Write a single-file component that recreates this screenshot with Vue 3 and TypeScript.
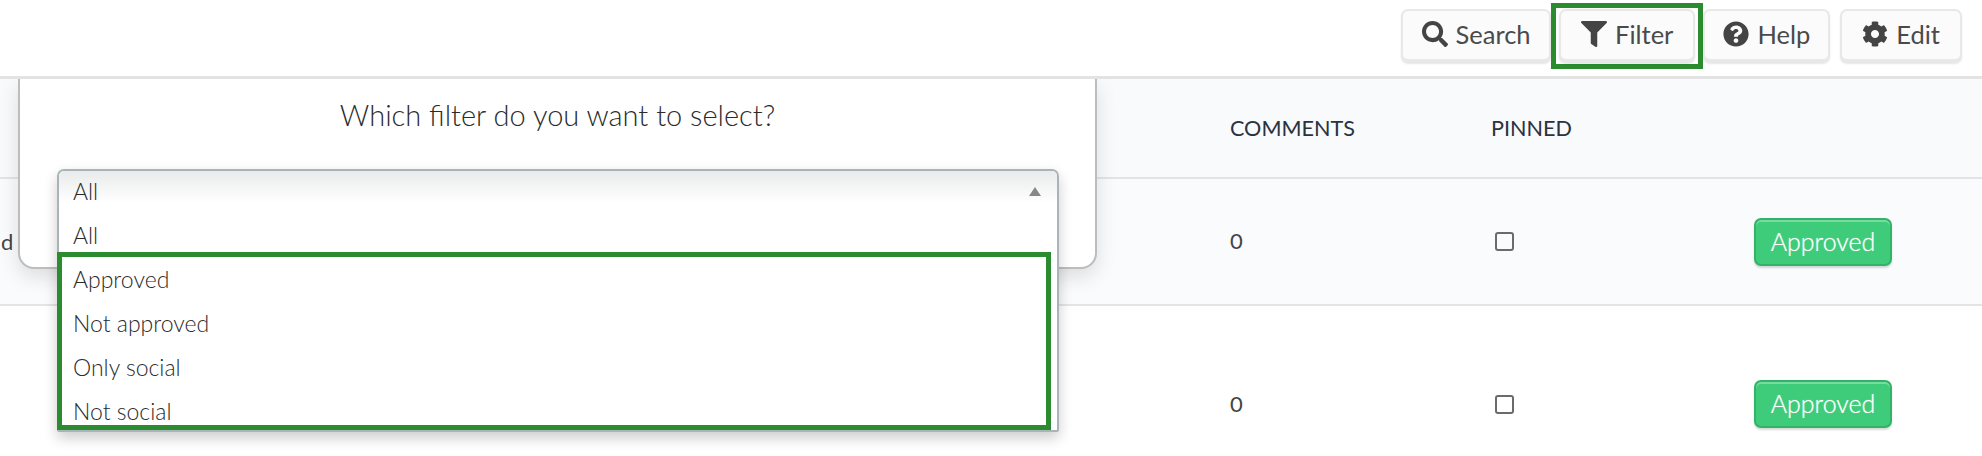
<script setup lang="ts">
const filters = ['All', 'Approved', 'Not approved', 'Only social', 'Not social'];
const rows = [
  { id: 1, name: 'd', comments: 0 },
  { id: 2, name: '', comments: 0 },
];
</script>

<template>
  <div class="page">
    <header class="topbar">
      <button type="button" class="btn btn--search">
        <svg class="ico" viewBox="0 0 512 512"><path d="M505 442.7L405.3 343c-4.5-4.5-10.6-7-17-7H372c27.6-35.3 44-79.7 44-128C416 93.1 322.9 0 208 0S0 93.1 0 208s93.1 208 208 208c48.3 0 92.7-16.4 128-44v16.3c0 6.4 2.5 12.5 7 17l99.7 99.7c9.4 9.4 24.6 9.4 33.9 0l28.3-28.3c9.4-9.4 9.4-24.6.1-34zM208 336c-70.7 0-128-57.2-128-128 0-70.7 57.2-128 128-128 70.7 0 128 57.2 128 128 0 70.7-57.2 128-128 128z" /></svg>
        Search
      </button>
      <div class="mark">
        <button type="button" class="btn">
          <svg class="ico" viewBox="0 0 512 512"><path d="M487.976 0H24.028C2.71 0-8.047 25.866 7.058 40.971L192 225.941V432c0 7.831 3.821 15.17 10.237 19.662l80 55.98C298.02 518.69 320 507.493 320 487.98V225.941l184.947-184.97C520.021 25.896 509.338 0 487.976 0z" /></svg>
          Filter
        </button>
      </div>
      <button type="button" class="btn btn--help">
        <svg class="ico" viewBox="0 0 512 512"><path d="M504 256c0 136.997-111.043 248-248 248S8 392.997 8 256C8 119.083 119.043 8 256 8s248 111.083 248 248zM262.655 90c-54.497 0-89.255 22.957-116.549 63.758-3.536 5.286-2.353 12.415 2.715 16.258l34.699 26.31c5.205 3.947 12.621 3.008 16.665-2.122 17.864-22.658 30.113-35.797 57.303-35.797 20.429 0 45.698 13.148 45.698 32.958 0 14.976-12.363 22.667-32.534 33.976C247.128 238.528 216 254.941 216 296v4c0 6.627 5.373 12 12 12h56c6.627 0 12-5.373 12-12v-1.333c0-28.462 83.186-29.647 83.186-106.667 0-58.002-60.165-102-116.531-102zM256 338c-25.365 0-46 20.635-46 46 0 25.364 20.635 46 46 46s46-20.636 46-46c0-25.365-20.635-46-46-46z" /></svg>
        Help
      </button>
      <button type="button" class="btn">
        <svg class="ico" viewBox="0 0 512 512"><path d="M487.4 315.7l-42.6-24.6c4.3-23.2 4.3-47 0-70.2l42.6-24.6c4.9-2.8 7.1-8.6 5.5-14-11.1-35.6-30-67.8-54.7-94.6-3.8-4.1-10-5.1-14.8-2.3L380.8 110c-17.9-15.4-38.5-27.3-60.8-35.1V25.8c0-5.6-3.9-10.5-9.4-11.7-36.7-8.2-74.3-7.8-109.2 0-5.5 1.2-9.4 6.1-9.4 11.7V75c-22.2 7.9-42.8 19.8-60.8 35.1L88.7 85.5c-4.9-2.8-11-1.9-14.8 2.3-24.7 26.7-43.6 58.9-54.7 94.6-1.7 5.4.6 11.2 5.5 14L67.3 221c-4.3 23.2-4.3 47 0 70.2l-42.6 24.6c-4.9 2.8-7.1 8.6-5.5 14 11.1 35.6 30 67.8 54.7 94.6 3.8 4.1 10 5.1 14.8 2.3l42.6-24.6c17.9 15.4 38.5 27.3 60.8 35.1v49.2c0 5.6 3.9 10.5 9.4 11.7 36.7 8.2 74.3 7.8 109.2 0 5.5-1.2 9.4-6.1 9.4-11.7v-49.2c22.2-7.9 42.8-19.8 60.8-35.1l42.6 24.6c4.9 2.8 11 1.9 14.8-2.3 24.7-26.7 43.6-58.9 54.7-94.6 1.5-5.5-.7-11.3-5.6-14.1zM256 336c-44.1 0-80-35.9-80-80s35.9-80 80-80 80 35.9 80 80-35.9 80-80 80z" /></svg>
        Edit
      </button>
    </header>

    <section class="table">
      <div class="thead grid">
        <span></span>
        <span>COMMENTS</span>
        <span>PINNED</span>
        <span></span>
      </div>
      <div v-for="row in rows" :key="row.id" class="trow grid">
        <span class="name">{{ row.name }}</span>
        <span class="count">{{ row.comments }}</span>
        <span class="pin"><i class="check"></i></span>
        <span><button type="button" class="approved">Approved</button></span>
      </div>
    </section>

    <div class="modal">
      <h2 class="modal__title">Which filter do you want to select?</h2>
      <div class="select-wrap">
        <div class="select">
          <div class="select__current">
            <span>All</span>
            <i class="caret"></i>
          </div>
          <div v-for="f in filters" :key="f" class="select__opt">{{ f }}</div>
        </div>
        <div class="highlight"></div>
      </div>
    </div>
  </div>
</template>

<style scoped>
.page {
  position: relative;
  height: 456px;
  overflow: hidden;
  background: #fff;
  font-family: Lato, "Liberation Sans", sans-serif;
  color: #444;
}

.topbar {
  position: relative;
  z-index: 3;
  display: flex;
  align-items: center;
  justify-content: flex-end;
  height: 71px;
  padding: 0 20px 5px 0;
  background: #fff;
  border-bottom: 3px solid #e3e3e3;
}
.btn {
  display: flex;
  align-items: center;
  gap: 8px;
  height: 53px;
  padding: 0 20px 2px;
  background: #fbfbfb;
  border: 2px solid #e8e8e8;
  border-bottom-width: 3px;
  border-radius: 7px;
  box-shadow: 0 2px 2px rgba(0, 0, 0, 0.1);
  font: 400 25.5px Lato, "Liberation Sans", sans-serif;
  color: #4a4a4a;
}
.btn--search {
  padding: 0 18.5px 2px;
}
.btn--help {
  padding: 0 18px 2px;
}
.topbar > .btn:last-child {
  margin-left: 10px;
}
.ico {
  width: 26px;
  height: 26px;
  fill: #444;
}
.mark {
  display: flex;
  align-items: center;
  height: 66px;
  padding: 0 3px;
  box-sizing: border-box;
  border: 5px solid #2a8c2f;
}

.grid {
  display: grid;
  grid-template-columns: 1230px 261px 263px 1fr;
  align-items: center;
}
.thead {
  height: 98px;
  background: #f9fafc;
  border-bottom: 2px solid #e2e4e7;
  font-size: 21.6px;
  font-weight: 400;
  color: #2a3340;
}
.trow {
  height: 125px;
  font-size: 22px;
  border-bottom: 2px solid #e2e4e7;
  color: #444;
}
.trow:nth-child(2) {
  background: #fafbfd;
}
.trow:last-child {
  height: 196px;
  border-bottom: 0;
}
.name {
  padding-left: 1px;
}
.count {
  padding-bottom: 2px;
}
.pin {
  padding-left: 4px;
}
.check {
  display: block;
  width: 19px;
  height: 19px;
  box-sizing: border-box;
  border: 2px solid #6b6b6b;
  border-radius: 3px;
}
.approved {
  display: block;
  width: 138px;
  height: 48px;
  padding: 0 0 2px;
  background: #3ecc7a;
  border: 2px solid #32b368;
  border-radius: 7px;
  box-shadow: inset 0 2px 0 rgba(255, 255, 255, 0.3), 0 2px 2px rgba(0, 0, 0, 0.15);
  font: 300 25px Lato, "Liberation Sans", sans-serif;
  color: #fff;
  text-shadow: 0 0 1px rgba(255, 255, 255, 0.7);
}

.modal {
  position: absolute;
  z-index: 2;
  top: 79px;
  left: 18px;
  width: 1079px;
  height: 190px;
  box-sizing: border-box;
  padding: 0 37px;
  background: #fff;
  border: 2px solid #bdbdbd;
  border-top: 0;
  border-radius: 0 0 16px 16px;
  box-shadow: 0 8px 20px rgba(0, 0, 0, 0.12);
}
.modal__title {
  margin: 0;
  padding: 19px 0 0;
  height: 90px;
  box-sizing: border-box;
  text-align: center;
  font-size: 29px;
  line-height: 34px;
  font-weight: 300;
  color: #2b2b2b;
}
.select-wrap {
  position: relative;
  width: 1002px;
}
.select {
  height: 263px;
  box-sizing: border-box;
  overflow: hidden;
  background: #fff;
  border: 2px solid #a9b4b8;
  border-radius: 7px 7px 2px 2px;
  box-shadow: 0 6px 14px rgba(0, 0, 0, 0.2);
  font-size: 23px;
  font-weight: 300;
  color: #2b2b2b;
}
.select__current {
  display: flex;
  align-items: center;
  justify-content: space-between;
  height: 44px;
  padding: 0 16px 4px 14px;
  box-sizing: border-box;
  background: linear-gradient(#e9eaea, #fff 72%);
}
.caret {
  width: 0;
  height: 0;
  border-left: 6px solid transparent;
  border-right: 6px solid transparent;
  border-bottom: 9px solid #888;
}
.select__opt {
  display: flex;
  align-items: center;
  height: 44px;
  padding: 0 0 4px 14px;
  box-sizing: border-box;
}
.highlight {
  position: absolute;
  top: 83px;
  left: 0;
  width: 994px;
  height: 178px;
  box-sizing: border-box;
  border: 5px solid #2a8c2f;
}
</style>
